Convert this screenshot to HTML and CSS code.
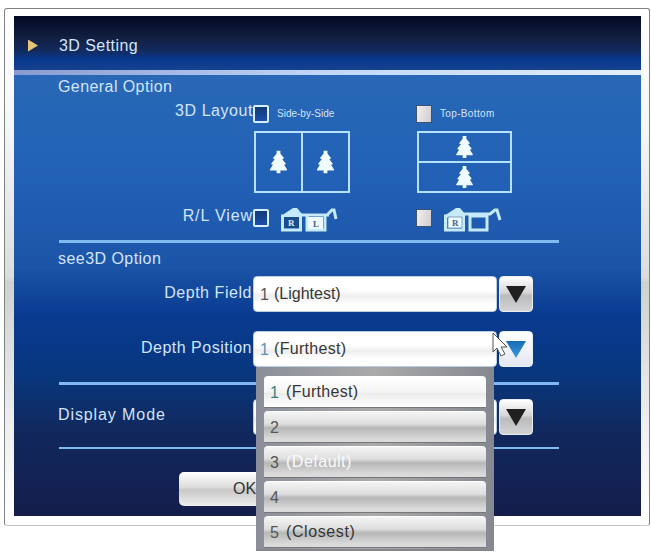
FILE: index.html
```html
<!DOCTYPE html>
<html lang="en">
<head>
<meta charset="utf-8">
<title>3D Setting</title>
<link rel="stylesheet" href="styles.css">
</head>
<body>
<svg class="defs" width="0" height="0" aria-hidden="true">
  <symbol id="tree" viewBox="0 0 18 24"><path d="M7 0h4v3l4 5-2 1 4 5-2 1 3 5v1h-7v3H7v-3H0v-1l3-5-2-1 4-5-2-1 4-5z"/></symbol>
</svg>
<main class="window">
  <header class="titlebar"><span class="marker"></span><h1 class="w-title">3D Setting</h1></header>
  <div class="content">
    <section class="general">
      <h2 class="w-general">General Option</h2>
      <div class="row layout-row">
        <span class="label w-layout">3D Layout</span>
        <span class="choice"><i class="check on"></i><small class="w-side">Side-by-Side</small></span>
        <span class="choice"><i class="check"></i><small class="w-top">Top-Bottom</small></span>
      </div>
      <div class="row picture-row">
        <span></span>
        <div class="picture side"><div><svg class="tree"><use href="#tree"/></svg></div><div><svg class="tree"><use href="#tree"/></svg></div></div>
        <div class="picture stack"><div><svg class="tree"><use href="#tree"/></svg></div><div><svg class="tree"><use href="#tree"/></svg></div></div>
      </div>
      <div class="row view-row">
        <span class="label w-view">R/L View</span>
        <span class="choice"><i class="check on"></i>
          <svg class="glasses" viewBox="0 0 58 26"><path class="roof" d="M1 9 13 1h4l5 6v3H1z"/><path class="frame" d="M20 8h29M47 8l5-5h2l2 9"/><path class="frame" d="M2.500 9h18v14h-18z"/><path class="frame" d="M27 9v14h18V8"/><path class="dark-lens" d="M4 10h15v11H4z"/><path class="lens" d="M28 10h15v12H28z"/><text x="8" y="19">R</text><text class="dark" x="33" y="20">L</text></svg>
        </span>
        <span class="choice"><i class="check"></i>
          <svg class="glasses" viewBox="0 0 58 26"><path class="roof" d="M1 9 13 1h4l5 6v3H1z"/><path class="frame" d="M20 7h27l5-4h2l3 10"/><path class="frame" d="M2.500 9h18v14h-18zM27 9h17v14H27z"/><path class="lens" d="M5 10h14v11H5z"/><path class="inner" d="M5 10h14v11H5z"/><text class="dark" x="9" y="19">R</text></svg>
        </span>
      </div>
    </section>
    <section class="see">
      <h2 class="w-see">see3D Option</h2>
      <div class="field">
        <span class="label w-field">Depth Field</span>
        <div class="input"><span class="num">1</span><span class="w-light">(Lightest)</span></div>
        <button class="arrow" aria-label="Open"><svg viewBox="0 0 20 18"><path d="M0 0h20L10 17z"/></svg></button>
      </div>
      <div class="field position">
        <span class="label w-position">Depth Position</span>
        <div class="input"><span class="num blue">1</span><span class="w-furthest">(Furthest)</span>
          <ul class="menu">
            <li class="selected"><span class="num green">1</span><span class="w-furthest">(Furthest)</span></li>
            <li><span class="num">2</span></li>
            <li><span class="num">3</span><span class="default">(Default)</span></li>
            <li><span class="num">4</span></li>
            <li><span class="num">5</span><span class="w-closest">(Closest)</span></li>
          </ul>
        </div>
        <button class="arrow active" aria-label="Close"><svg viewBox="0 0 20 18"><defs><linearGradient id="blue" x2="0" y2="1"><stop stop-color="#176cb0"/><stop offset="1" stop-color="#3b9be5"/></linearGradient></defs><path d="M0 0h20L10 17z"/></svg></button>
        <svg class="cursor" viewBox="0 0 16 25"><path d="M1 1v19l4-4 4 8 4-2-4-7h6z"/></svg>
      </div>
    </section>
    <section class="display">
      <div class="field">
        <h2 class="w-display">Display Mode</h2>
        <div class="input"></div>
        <button class="arrow" aria-label="Open"><svg viewBox="0 0 20 18"><path d="M0 0h20L10 17z"/></svg></button>
      </div>
    </section>
    <footer><button class="ok">OK</button></footer>
  </div>
</main>
</body>
</html>
```
FILE: styles.css
```css
* { box-sizing: border-box; }
body { margin: 0; height: 554px; overflow: hidden; padding: 8px 1px 0 4px; background: #fff; font: 16px/20px "Liberation Sans", sans-serif; color: #d3e4fb; }
h1, h2 { margin: 0; font: inherit; white-space: nowrap; }
h2 { margin-left: -1px; }
button { border: 0; padding: 0; font: inherit; }
.defs { position: absolute; }
.window { height: 518px; padding: 7px 8px 9px 9px; border: 1px solid #7d8287; border-bottom-color: #c8c8c8; border-radius: 3px; background: linear-gradient(#fff, #f6f7f7 22%, #dcdcdc 52%, #cfd0d0 53%, #eee 80%, #fff 97%); }
.titlebar { height: 59px; padding: 5px 0 0 14px; display: flex; align-items: center; gap: 21px; border-bottom: 5px solid; border-image: linear-gradient(90deg, #879bd0, #c1d7fa 50%, #e2efff) 1; background: linear-gradient(#010923, #121f40 40%, #132b60 65%, #07378e 80%, #16428e); }
.marker { width: 10px; height: 12px; background: #e6c577; clip-path: polygon(0 0, 100% 50%, 0 100%); }
.content { height: 441px; padding-left: 45px; background: linear-gradient(#2868b6, #2160b5 25%, #1c55a8 43%, #083a90 55%, #08377d 68%, #11285d 81%, #141d4c); }
section { width: 500px; border-bottom: 3px solid #83b9f3; }
.general { height: 168px; }
.row { display: grid; grid-template-columns: 194px 163px 143px; }
.label { text-align: right; justify-self: end; white-space: nowrap; }
.w-title { letter-spacing: .45px; }
.w-general { letter-spacing: .42px; }
.w-layout { letter-spacing: .55px; }
.w-view { letter-spacing: .9px; }
.w-see { letter-spacing: .45px; }
.w-field { letter-spacing: .55px; }
.w-position { letter-spacing: .5px; }
.w-display { letter-spacing: .9px; }
.w-furthest { letter-spacing: .3px; }
.w-closest { letter-spacing: .6px; }
.w-top { letter-spacing: .35px; }
.choice { display: flex; align-items: center; gap: 8px; }
.check { width: 16px; height: 18px; flex: none; border: 1px solid #3b5273; background: linear-gradient(100deg, #f3eff0, #cfccd0); }
.check.on { border: 2px solid #d7eeff; border-radius: 2px; background: linear-gradient(#123b73, #1a4eaa); }
small { font-size: 10px; }
.general h2 { padding-top: 2px; height: 26px; }
.layout-row { height: 26px; align-items: start; }
.layout-row .choice { padding-top: 3px; }
.picture-row { padding-top: 4px; }
.picture { width: 96px; height: 62px; border: 2px solid #b5e1fb; display: flex; margin-left: 1px; }
.stack { width: 95px; }
.picture div { flex: 1; display: flex; align-items: center; justify-content: center; }
.side div + div { border-left: 2px solid #b5e1fb; }
.stack { flex-direction: column; }
.stack div + div { border-top: 2px solid #b5e1fb; }
.tree { width: 17px; height: 24px; fill: #f0fbff; }
.stack .tree { height: 22px; width: 17px; }
.view-row { padding-top: 13px; }
.view-row .choice { height: 24px; gap: 11px; }
.glasses { width: 58px; height: 26px; overflow: visible; margin-top: 3px; }
.frame { fill: none; stroke: #c4eafb; stroke-width: 3; }
.roof { fill: #c4eafb; }
.inner { fill: none; stroke: #7fa3bc; stroke-width: 1; }
.dark-lens { fill: #194d90; }
.lens { fill: #edfaff; }
.glasses text { font: bold 9px "Liberation Serif", serif; fill: #d8edff; }
.glasses .dark { fill: #49647a; }
.see { height: 142px; }
.see h2 { padding-top: 6px; height: 33px; }
.field { display: grid; grid-template-columns: 194px 246px 34px; align-items: start; height: 55px; position: relative; }
.field .label { padding-top: 7px; margin-right: 1px; }
.input { height: 36px; border: 1px solid #b8cde2; border-radius: 4px; background: linear-gradient(#fff 40%, #eee 56%, #fff 80%); display: flex; align-items: center; padding-left: 6px; color: #363636; position: relative; width: 244px; }
.num { width: 14px; flex: none; color: #555; padding-top: 2px; }
.num.blue { color: #5b8fb9; }
.num.green { color: #398078; }
.arrow { width: 34px; height: 36px; display: grid; place-items: center; border: 1px solid #e8edf1; border-radius: 4px; background: linear-gradient(#fff, #d7d7d8 45%, #b9bbbd 55%, #d4d4d5); }
.arrow svg { width: 20px; height: 18px; fill: #202020; margin-top: 2px; }
.arrow.active { background: linear-gradient(#fff, #e4e8f1); }
.active svg { fill: url(#blue); }
.cursor { position: absolute; width: 16px; height: 25px; left: 433px; top: 1px; fill: #fff; stroke: #555; stroke-width: 1; z-index: 4; }
.menu { position: absolute; left: 2px; top: 35px; width: 238px; height: 184px; margin: 0; padding: 9px 8px 0 8px; list-style: none; background: linear-gradient(90deg, #8b8e9a, #aaa 50%, #858890); border-bottom: 2px solid #85868b; z-index: 3; display: flex; flex-direction: column; gap: 3px; }
.menu li { height: 32px; flex: none; border-top: 1px solid #fff; border-bottom: 1px solid #777; border-radius: 4px 4px 0 0; display: flex; align-items: center; padding-left: 6px; background: linear-gradient(#f4f4f4, #dedede 40%, #b7b7b7 53%, #dadada 90%); }
.menu .num { width: 16px; }
.menu .selected { background: linear-gradient(#fff, #f5f5f5 50%, #ececec 55%, #fff); }
.menu .default { color: #fafafa; letter-spacing: .5px; }
.display { height: 64px; border-width: 2px; }
.display .field { padding-top: 14px; }
.display h2 { padding-top: 6px; }
footer { padding: 23px 0 0 120px; }
.ok { display: block; width: 150px; height: 34px; border-radius: 5px; text-align: left; padding-left: 54px; color: #333; background: linear-gradient(#fff, #ddd 45%, #c8c8c8 52%, #eee); }
```
